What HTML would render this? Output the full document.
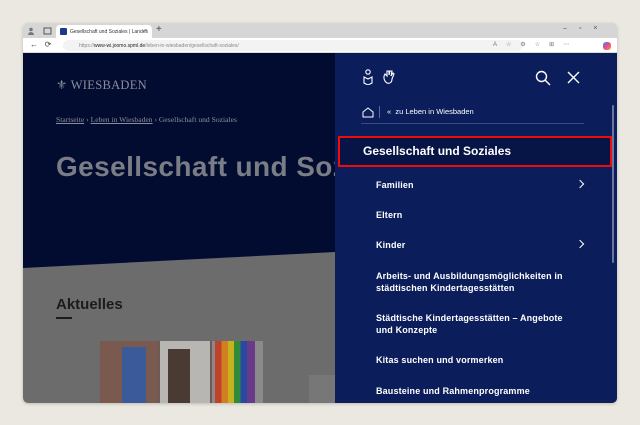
<!DOCTYPE html>
<html><head><meta charset="utf-8"><style>
*{margin:0;padding:0;box-sizing:border-box}
body{width:640px;height:425px;background:#ebe8e1;font-family:"Liberation Sans",sans-serif;position:relative;overflow:hidden}
.win{position:absolute;left:23px;top:23px;width:594px;height:380px;background:#fff;border-radius:5px;overflow:hidden;box-shadow:0 1px 3px rgba(0,0,0,.2)}
.tabbar{position:absolute;left:0;top:0;width:594px;height:15px;background:#d6d6d6}
.tab{position:absolute;left:33px;top:2px;width:96px;height:13px;background:#fff;border-radius:4px 4px 0 0;font-size:5px;color:#333;padding:4px 0 0 14px;white-space:nowrap}
.fav{position:absolute;left:4px;top:3px;width:7px;height:7px;background:#1d3a8a;border-radius:1px}
.addr{position:absolute;left:0;top:15px;width:594px;height:15px;background:#fff;border-bottom:1px solid #ddd}
.url{position:absolute;left:40px;top:2px;width:460px;height:11px;background:#f3f3f3;border-radius:6px;font-size:5px;color:#888;padding:3px 0 0 16px}
.url b{color:#222;font-weight:normal}
.content{position:absolute;left:0;top:30px;width:594px;height:350px;background:#6c6c6c;overflow:hidden}
.navy{position:absolute;left:0;top:0;width:312px;height:230px;background:#020c30;clip-path:polygon(0 0,100% 0,100% 199px,0 215px)}
.logo{position:absolute;left:33px;top:24px;color:#8a8e9c;font-family:"Liberation Serif",serif;font-size:12.5px;letter-spacing:.3px}
.bc{position:absolute;left:33px;top:62px;color:#8a8e9c;font-family:"Liberation Serif",serif;font-size:7.6px;white-space:nowrap}
.bc u{text-decoration:underline}
h1{position:absolute;left:33px;top:98px;color:#7a7d85;font-size:28px;font-weight:bold;white-space:nowrap;letter-spacing:.4px}
.akt{position:absolute;left:33px;top:243px;color:#1c1c1c;font-size:15px;font-weight:bold}
.akt:after{content:"";position:absolute;left:0;top:21px;width:16px;height:2px;background:#1c1c1c}
.photo{position:absolute;left:77px;top:288px;width:163px;height:62px;background:#6b5a55;overflow:hidden}
.panel{position:absolute;left:312px;top:0;width:282px;height:350px;background:#0b1e5b;color:#fff}
.sel{position:absolute;left:3px;top:83px;width:274px;height:31px;background:#061446;border:2.5px solid #f20a0a;font-weight:bold;font-size:12px;padding:6px 0 0 23px}
.it{position:absolute;left:41px;font-size:9px;font-weight:bold;line-height:12px;letter-spacing:.15px}
.chev{position:absolute;left:242px;width:6px;height:6px;border-top:1.3px solid #fff;border-right:1.3px solid #fff;transform:rotate(45deg)}
.sb{position:absolute;left:277px;top:52px;width:2px;height:158px;background:#6a76a0;border-radius:2px}
</style></head><body>
<div class="win">
 <div class="tabbar">
  <svg style="position:absolute;left:4px;top:4px" width="30" height="8"><circle cx="4" cy="2.5" r="1.8" fill="#777"/><path d="M1 8a3 3 0 0 1 6 0z" fill="#777"/><rect x="17" y="1" width="7" height="6" fill="none" stroke="#555" stroke-width="1"/></svg>
  <div class="tab"><span class="fav"></span>Gesellschaft und Soziales | Landes<span style="position:absolute;right:5px;top:3px">×</span></div>
  <div style="position:absolute;left:133px;top:1px;font-size:10px;color:#444">+</div>
  <div style="position:absolute;left:540px;top:2px;font-size:7px;color:#555;letter-spacing:12px">–▫×</div>
 </div>
 <div class="addr">
  <div style="position:absolute;left:7px;top:2px;font-size:8px;color:#444">←&nbsp;&nbsp;&nbsp;⟳</div>
  <div class="url">https://<b>www-wi.joomo.spml.de</b>/leben-in-wiesbaden/gesellschaft-soziales/</div>
  <div style="position:absolute;left:470px;top:3px;font-size:6px;color:#777;letter-spacing:9px">A☆⚙☆⊞⋯</div>
  <div style="position:absolute;left:580px;top:4px;width:8px;height:8px;border-radius:3px;background:linear-gradient(135deg,#3b82f6,#ec4899,#f59e0b)"></div>
 </div>
 <div class="content">
  <div class="navy"></div>
  <div class="logo">⚜ WIESBADEN</div>
  <div class="bc"><u>Startseite</u> › <u>Leben in Wiesbaden</u> › Gesellschaft und Soziales</div>
  <h1>Gesellschaft und Soz</h1>
  <div class="akt">Aktuelles</div>
  <div class="photo">
   <div style="position:absolute;left:0;top:0;width:58px;height:62px;background:#7a5a4e"></div>
   <div style="position:absolute;left:22px;top:6px;width:24px;height:56px;background:#3a5a9a"></div>
   <div style="position:absolute;left:60px;top:0;width:50px;height:62px;background:#b8b6b2"></div>
   <div style="position:absolute;left:68px;top:8px;width:22px;height:54px;background:#4a3a34"></div>
   <div style="position:absolute;left:112px;top:0;width:51px;height:62px;background:#8a8a8a"></div>
   <div style="position:absolute;left:115px;top:0;width:40px;height:62px;background:linear-gradient(90deg,#c0402a 0 16%,#d08020 16% 32%,#c8b020 32% 48%,#2f8a3a 48% 64%,#2a4aa0 64% 80%,#6a3a8a 80%)"></div>
  </div>
  <div style="position:absolute;left:286px;top:322px;width:26px;height:28px;background:#777"></div>
  <div class="panel">
   <svg style="position:absolute;left:28px;top:16px" width="42" height="16" fill="none" stroke="#fff" stroke-width="1.1"><circle cx="5" cy="3" r="2.2"/><path d="M1 8l4 2 4-2v6l-4 2-4-2z"/><path d="M24 14c-3-2-4-6-2-9l2 2V2l2 0v4l1-4 2 0-1 5 2-3 1 1-2 5c0 3-2 5-5 4z"/></svg>
   <svg style="position:absolute;left:200px;top:17px" width="16" height="16" fill="none" stroke="#fff" stroke-width="1.4"><circle cx="6.5" cy="6.5" r="5"/><path d="M10 10l5 5"/></svg>
   <svg style="position:absolute;left:232px;top:18px" width="13" height="13" stroke="#fff" stroke-width="1.4"><path d="M1 1l11 11M12 1L1 12"/></svg>
   <svg style="position:absolute;left:27px;top:54px" width="12" height="11" fill="none" stroke="#fff" stroke-width="1"><path d="M1 5l5-4 5 4v5H1z"/></svg>
   <div style="position:absolute;left:44px;top:53px;width:1px;height:12px;background:#5a6a9a"></div>
   <div style="position:absolute;left:52px;top:54px;font-size:7.5px">«&nbsp;&nbsp;zu Leben in Wiesbaden</div>
   <div style="position:absolute;left:26px;top:70px;width:223px;height:1px;background:#3a4a80"></div>
   <div class="sel">Gesellschaft und Soziales</div>
   <div class="it" style="top:126px">Familien</div><div class="chev" style="top:128px"></div>
   <div class="it" style="top:156px">Eltern</div>
   <div class="it" style="top:186px">Kinder</div><div class="chev" style="top:188px"></div>
   <div class="it" style="top:217px">Arbeits- und Ausbildungsmöglichkeiten in<br>städtischen Kindertagesstätten</div>
   <div class="it" style="top:259px">Städtische Kindertagesstätten – Angebote<br>und Konzepte</div>
   <div class="it" style="top:301px">Kitas suchen und vormerken</div>
   <div class="it" style="top:332px">Bausteine und Rahmenprogramme</div>
   <div class="sb"></div>
  </div>
 </div>
</div>
</body></html>
